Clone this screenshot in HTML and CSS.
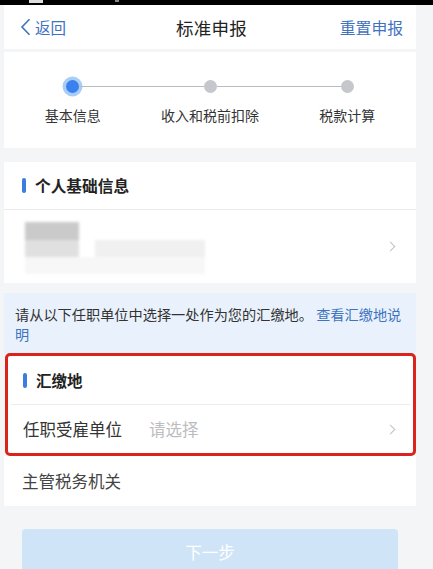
FILE: index.html
```html
<!DOCTYPE html>
<html lang="zh-CN">
<head>
<meta charset="utf-8">
<title>标准申报</title>
<link rel="stylesheet" href="styles.css">
</head>
<body>
<div class="statusbar"><span class="sb-a"></span><span class="sb-b"></span></div>
<div class="page">
  <header class="nav">
    <a class="back">
      <svg width="11" height="18" viewBox="0 0 11 18"><path d="M9.5 1.2 L2 9 L9.5 16.8" fill="none" stroke="#3f72bf" stroke-width="1.6"/></svg>
      <span>返回</span>
    </a>
    <h1 class="title">标准申报</h1>
    <a class="reset">重置申报</a>
  </header>

  <section class="stepper">
    <div class="step first active">
      <div class="track"><i class="ln"></i><b class="dot"></b><i class="ln"></i></div>
      <div class="label">基本信息</div>
    </div>
    <div class="step">
      <div class="track"><i class="ln"></i><b class="dot"></b><i class="ln"></i></div>
      <div class="label">收入和税前扣除</div>
    </div>
    <div class="step last">
      <div class="track"><i class="ln"></i><b class="dot"></b><i class="ln"></i></div>
      <div class="label">税款计算</div>
    </div>
  </section>

  <section class="card">
    <div class="card-head"><span class="bar"></span>个人基础信息</div>
    <div class="row blurred">
      <div class="blur">
        <div class="bl bl1"></div>
        <div class="bl-line"><div class="bl bl2"></div><div class="bl bl3"></div></div>
        <div class="bl bl4"></div>
      </div>
      <span class="chev"></span>
    </div>
  </section>

  <div class="notice">请从以下任职单位中选择一处作为您的汇缴地。 <a class="link">查看汇缴地说明</a></div>

  <section class="highlight">
    <div class="card-head inner"><span class="bar"></span>汇缴地</div>
    <div class="field">
      <span class="f-label">任职受雇单位</span>
      <span class="f-value">请选择</span>
      <span class="chev"></span>
    </div>
  </section>
  <div class="field plain">
    <span class="f-label">主管税务机关</span>
  </div>

  <div class="btn-wrap"><button class="next">下一步</button></div>
</div>
</body>
</html>
```
FILE: styles.css
```css
* { box-sizing: border-box; }
html, body { margin: 0; padding: 0; }
body {
  background: #f4f5f7;
  font-family: "Noto Sans CJK SC", "Noto Sans", sans-serif;
  color: #333;
  overflow: hidden;
  height: 569px;
}
.statusbar {
  height: 5px;
  background: #000;
  display: flex;
  gap: 60px;
  padding-left: 29px;
}
.sb-a { width: 14px; height: 3px; background: #ddd; }
.sb-b { width: 4px; height: 2px; background: #888; margin-left: 12px; }

.page {
  width: 412px;
  margin-left: 4px;
}

.nav {
  height: 44px;
  background: #fff;
  display: flex;
  align-items: center;
  justify-content: space-between;
  padding: 0 13px 0 16px;
}
.back {
  display: flex;
  align-items: center;
  gap: 4px;
  color: #3f72bf;
  font-size: 15.5px;
  width: 90px;
}
.title {
  margin: 0;
  font-size: 17.5px;
  font-weight: 400;
  color: #222;
  letter-spacing: 0.2px;
}
.reset {
  color: #3f72bf;
  font-size: 15.8px;
  width: 90px;
  text-align: right;
}

.stepper {
  margin-top: 3px;
  height: 96px;
  background: #fff;
  display: grid;
  grid-template-columns: repeat(3, 1fr);
  padding-top: 24px;
}
.step { display: flex; flex-direction: column; align-items: center; }
.track {
  width: 100%;
  height: 20px;
  display: flex;
  align-items: center;
}
.ln { flex: 1; height: 1px; background: #b9bbbf; }
.first .ln:first-child, .last .ln:last-child { background: transparent; }
.dot {
  width: 13px;
  height: 13px;
  border-radius: 50%;
  background: #c5c7cc;
}
.active .dot {
  width: 13px;
  height: 13px;
  background: #3a80ee;
  box-shadow: 0 0 0 3.5px #aacdf6;
}
.label {
  margin-top: 9px;
  font-size: 14px;
  color: #333;
  line-height: 20px;
}

.card {
  margin-top: 14px;
  background: #fff;
}
.card-head {
  height: 48px;
  display: flex;
  align-items: center;
  padding-left: 18px;
  font-size: 15.7px;
  font-weight: 700;
  color: #222;
  border-bottom: 1px solid #ececee;
}
.bar {
  width: 4px;
  height: 15px;
  border-radius: 2px;
  background: #3b7de0;
  margin-right: 9px;
}
.row {
  height: 73px;
  display: flex;
  align-items: center;
  justify-content: space-between;
  padding: 0 20px 0 21px;
}
.blur {
  display: flex;
  flex-direction: column;
  filter: blur(1.5px);
  padding-top: 2px;
}
.bl1 { width: 54px; height: 18px; background: #cacaca; }
.bl-line { display: flex; gap: 16px; }
.bl2 { width: 54px; height: 17px; background: #e0e0e0; }
.bl3 { width: 110px; height: 17px; background: #f0f0f0; }
.bl4 { width: 180px; height: 17px; background: #f7f7f7; }
.chev {
  width: 7px;
  height: 7px;
  border-top: 1.4px solid #c2c2c4;
  border-right: 1.4px solid #c2c2c4;
  transform: rotate(45deg);
  margin-right: 2px;
}

.notice {
  margin-top: 10px;
  background: #e9f2fc;
  padding: 12px 8px 0 11px;
  height: 60px;
  font-size: 14.2px;
  line-height: 19.5px;
  color: #333;
}
.link { color: #3f72bf; }

.highlight {
  margin-top: 0;
  border: 3px solid #d9231c;
  border-radius: 5px;
  background: #fff;
  overflow: hidden;
  margin-left: 1px;
}
.card-head.inner {
  height: 49px;
  font-size: 15.5px;
  margin: 0 3px 0 3px;
  padding-left: 12px;
  border-bottom: 1px solid #ececee;
}
.field {
  height: 48px;
  display: flex;
  align-items: center;
  padding: 0 17px 0 15px;
  font-size: 16.5px;
  color: #333;
}
.f-label { width: 126px; }
.f-value { flex: 1; color: #bdbdbf; }
.field.plain {
  height: 50px;
  background: #fff;
  padding-left: 18px;
  color: #444;
}

.btn-wrap {
  padding: 23px 18px 0 18px;
}
.next {
  width: 100%;
  height: 50px;
  border: none;
  border-radius: 4px;
  background: #d0e4f8;
  color: #fff;
  font-family: "Noto Sans CJK SC", sans-serif;
  font-size: 16.5px;
  padding-bottom: 6px;
}
```
